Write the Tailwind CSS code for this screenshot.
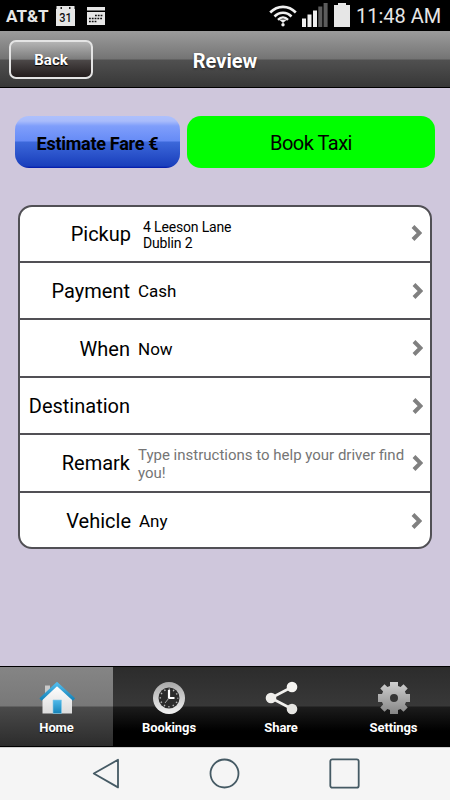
<!DOCTYPE html>
<html lang="en">
<head>
  <meta charset="UTF-8" />
  <meta name="viewport" content="width=device-width, initial-scale=1.0" />
  <title>Review</title>
  <script src="https://cdn.jsdelivr.net/npm/@tailwindcss/browser@4"></script>
</head>
<body class="w-[450px] h-[800px] overflow-hidden flex flex-col bg-[#cfc7dc] text-black font-['Roboto',sans-serif]">

  <!-- Status bar -->
  <div class="h-[31px] shrink-0 bg-black flex items-center pl-[6px] pr-[9px] text-[#e6e6e6]">
    <span class="text-[17px] leading-[31px] font-bold w-[50px] whitespace-nowrap pt-[1px]">AT&amp;T</span>
    <svg class="w-[19px] h-[20px]" viewBox="0 0 19 20">
      <path d="M.500 0H18.500v3H19V20H0V3h.500z" fill="#e6e6e6" />
      <path d="M4.500 1h1.500v2H4.500zM13 1h1.500v2H13z" fill="#222" />
      <text x="9.500" y="16" text-anchor="middle" font-size="12.500" font-weight="500" textLength="12.500" lengthAdjust="spacingAndGlyphs" fill="#111" font-family="Roboto">31</text>
    </svg>
    <svg class="w-[18px] h-[18px] ml-[12px]" viewBox="0 0 18 18">
      <path d="M0 0h18v3.500H0zM0 5h18v13H0z" fill="#e6e6e6" />
      <path d="M8 8.500h8M2 11.500h14M2 14.500h8" stroke="#111" stroke-width="1.700" stroke-dasharray="1.800 1" />
    </svg>
    <svg class="w-[28px] h-[22px] ml-auto mt-[1px]" viewBox="0 0 28 22" fill="none" stroke="#f0f0f0" stroke-width="2.600">
      <path d="M1.200 7.500C8.500 0 19.500 0 26.800 7.500" />
      <path d="M5.500 11.500c5-5 12-5 17 0" />
      <path d="M9 14.800c3-3 7-3 10 0" stroke-width="2.400" />
      <path d="M10 14.500h8l-4 3.500z" fill="#f0f0f0" stroke="none" />
      <circle cx="14" cy="19.700" r="1.700" fill="#f0f0f0" stroke="none" />
    </svg>
    <svg class="w-[26px] h-[24px] ml-[5px] -mt-[1px]" viewBox="0 0 26 24">
      <path d="M0 15.500h4V24H0zM5.500 11.500h4V24h-4zM11 7.500h4V24h-4z" fill="#f0f0f0" />
      <path d="M16.300 3.500h4V24h-4zM21.600 0h4v24h-4z" fill="#5c5c5c" />
    </svg>
    <svg class="w-[16px] h-[24px] ml-[6px] -mt-[1px]" viewBox="0 0 16 24">
      <path d="M4 0h8v2h4v22H0V2h4z" fill="#e6e6e6" />
    </svg>
    <span class="w-[85px] ml-[6px] pt-[2px] text-[20px] leading-[31px] text-right whitespace-nowrap">11:48 AM</span>
  </div>

  <!-- Header -->
  <header class="h-[57px] shrink-0 border-b border-black bg-[linear-gradient(#9c9c9c_0,#747474_28px,#505050_29px,#373737_56px)] grid grid-cols-[1fr_auto_1fr] items-center px-[9px] text-white">
    <button class="w-[84px] h-[39px] rounded-[7px] border-2 border-[#e4e4e4] bg-[linear-gradient(#b4b4b4_0,#7c7c7c_49%,#4c4848_52%,#231c1c_100%)] text-[15px] font-bold pt-[2px] text-shadow-[0_1px_1px_#000]">Back</button>
    <h1 class="text-[20px] font-bold pt-[3px] text-shadow-[0_1px_2px_#222]">Review</h1>
  </header>

  <main class="flex-1 pt-[28px]">
    <div class="flex gap-[7px] pl-[15px] pr-[15px]">
      <button class="w-[165px] h-[52px] rounded-[14px] bg-[linear-gradient(#adc0fd_0,#a9bcfb_5px,#7f9efb_10px,#668bf6_25px,#3c68da_26px,#1a3fbc_50px,#0014a8_52px)] text-[18px] tracking-[-0.27px] font-bold pt-[2px]">Estimate Fare €</button>
      <button class="w-[248px] h-[52px] rounded-[14px] bg-[#00ff00] text-[20px] tracking-[-0.5px] pt-[2px]">Book Taxi</button>
    </div>

    <!-- Booking details -->
    <div class="w-[414px] h-[344px] mt-[37px] ml-[18px] rounded-[14px] border-2 border-[#515055] bg-white grid grid-rows-[56px_57px_58px_57px_58px_54px] divide-y-2 divide-[#515055] overflow-hidden">
      <div class="flex items-center pr-[8px]">
        <span class="w-[111px] text-right text-[20px]">Pickup</span>
        <span class="flex-1 ml-[12px] pt-[1px] text-[14px] tracking-[-0.16px] leading-[16px]">4 Leeson Lane<br>Dublin 2</span>
        <svg class="w-[11px] h-[16px] -mt-[2px]" viewBox="0 0 11 16"><path d="M2 1.500 8.500 8 2 14.500" fill="none" stroke="#808080" stroke-width="4" /></svg>
      </div>
      <div class="flex items-center pt-[1px] pr-[7px]">
        <span class="w-[110px] text-right text-[20px]">Payment</span>
        <span class="flex-1 ml-[8px] pt-[1px] text-[17px]">Cash</span>
        <svg class="w-[11px] h-[16px]" viewBox="0 0 11 16"><path d="M2 1.500 8.500 8 2 14.500" fill="none" stroke="#808080" stroke-width="4" /></svg>
      </div>
      <div class="flex items-center pt-[1px] pr-[7px]">
        <span class="w-[110px] text-right text-[20px]">When</span>
        <span class="flex-1 ml-[8px] pt-[2px] text-[17px]">Now</span>
        <svg class="w-[11px] h-[16px] -mt-[1px]" viewBox="0 0 11 16"><path d="M2 1.500 8.500 8 2 14.500" fill="none" stroke="#808080" stroke-width="4" /></svg>
      </div>
      <div class="flex items-center pt-[1px] pr-[7px]">
        <span class="w-[110px] text-right text-[20px]">Destination</span>
        <span class="flex-1"></span>
        <svg class="w-[11px] h-[16px] -mt-[1px]" viewBox="0 0 11 16"><path d="M2 1.500 8.500 8 2 14.500" fill="none" stroke="#808080" stroke-width="4" /></svg>
      </div>
      <div class="flex items-center pr-[7px]">
        <span class="w-[110px] text-right text-[20px]">Remark</span>
        <span class="flex-1 ml-[8px] pt-[2px] text-[15px] leading-[18px] text-[#757575]">Type instructions to help your driver find<br>you!</span>
        <svg class="w-[11px] h-[16px] -mt-[1px]" viewBox="0 0 11 16"><path d="M2 1.500 8.500 8 2 14.500" fill="none" stroke="#808080" stroke-width="4" /></svg>
      </div>
      <div class="flex items-center pt-[2px] pr-[8px]">
        <span class="w-[111px] text-right text-[20px]">Vehicle</span>
        <span class="flex-1 ml-[8px] pt-[1px] text-[17px]">Any</span>
        <svg class="w-[11px] h-[16px] -mt-[1px]" viewBox="0 0 11 16"><path d="M2 1.500 8.500 8 2 14.500" fill="none" stroke="#808080" stroke-width="4" /></svg>
      </div>
    </div>
  </main>

  <!-- Tabs -->
  <nav class="h-[81px] shrink-0 border-y border-black grid grid-cols-[113px_112px_112px_113px] bg-[linear-gradient(#2c2c2c_0,#383838_39px,#1c1c1c_40px,#000_64px)] text-white text-[13px] tracking-[-0.1px] leading-[15px] font-bold text-shadow-[0_1px_1px_#000]">
    <a class="flex flex-col items-center pt-[14px] gap-[5px] bg-[linear-gradient(#858585_0,#787878_39px,#4a4a4a_40px,#2c2c2c_79px)]">
      <svg class="w-[36px] h-[34px]" viewBox="0 0 36 34">
        <defs>
          <linearGradient id="roof" x1="0" y1="0" x2="0" y2="1"><stop offset="0" stop-color="#4fb9ea" /><stop offset="1" stop-color="#1583b8" /></linearGradient>
          <linearGradient id="wall" x1="0" y1="0" x2="0" y2="1"><stop offset="0" stop-color="#fff" /><stop offset="1" stop-color="#dcdcdc" /></linearGradient>
        </defs>
        <path d="M6 4.500h5V12H6z" fill="#c9c9c9" />
        <path d="M18 4 3.500 17v15.500h29.500V17z" fill="url(#wall)" />
        <path d="M14 19h8.500v13.500H14z" fill="url(#roof)" stroke="#8ccbe6" stroke-width=".6" />
        <path d="M1.500 18.500 18 3l17 15.500" fill="none" stroke="url(#roof)" stroke-width="3.200" />
      </svg>
      <span>Home</span>
    </a>
    <a class="flex flex-col items-center pt-[14px] gap-[5px]">
      <svg class="w-[34px] h-[34px]" viewBox="0 0 34 34">
        <defs>
          <linearGradient id="rim" x1="0" y1="0" x2="0" y2="1"><stop offset="0" stop-color="#a8a8a8" /><stop offset="1" stop-color="#f2f2f2" /></linearGradient>
        </defs>
        <circle cx="17" cy="17" r="16" fill="url(#rim)" />
        <circle cx="17" cy="17" r="10.500" fill="#2b2b2b" />
        <circle cx="17" cy="17" r="8.700" fill="none" stroke="#bbb" stroke-width="1.500" stroke-dasharray="1.300 3.255" stroke-dashoffset=".65" />
        <path d="M17 9v8h5.500" fill="none" stroke="#fff" stroke-width="2.200" />
        <path d="m17 17-4 5" stroke="#aaa" stroke-width="1" />
      </svg>
      <span>Bookings</span>
    </a>
    <a class="flex flex-col items-center pt-[14px] gap-[5px]">
      <svg class="w-[34px] h-[34px]" viewBox="0 0 34 34">
        <path d="M28 6 7 17l21 11" fill="none" stroke="#f2f1ee" stroke-width="2.600" />
        <circle cx="28" cy="6" r="5.300" fill="#f5f4f1" />
        <circle cx="7" cy="17" r="5.300" fill="#efeeeb" />
        <circle cx="28" cy="28" r="5.300" fill="#e6e5e2" />
      </svg>
      <span>Share</span>
    </a>
    <a class="flex flex-col items-center pt-[14px] gap-[5px]">
      <svg class="w-[34px] h-[34px]" viewBox="0 0 34 34">
        <defs>
          <linearGradient id="gear" gradientUnits="userSpaceOnUse" x1="0" y1="1" x2="0" y2="33"><stop offset="0" stop-color="#d0d0d0" /><stop offset="1" stop-color="#858585" /></linearGradient>
        </defs>
        <path fill="url(#gear)" fill-rule="evenodd" d="M13 1h8v4l2.600 1.100 2.900-2.800 4.200 4.200-2.800 2.900L29 13h4v8h-4l-1.100 2.600 2.800 2.900-4.200 4.200-2.900-2.800L21 29v4h-8v-4l-2.600-1.100-2.900 2.800-4.200-4.200 2.800-2.900L5 21H1v-8h4l1.100-2.600-2.800-2.900 4.200-4.200 2.900 2.800L13 5zM17 13a4 4 0 1 0 0 8 4 4 0 0 0 0-8z" />
      </svg>
      <span>Settings</span>
    </a>
  </nav>

  <!-- Android navigation -->
  <div class="h-[53px] shrink-0 border-t border-[#d0d0d0] bg-[#f5f5f5] flex justify-between pt-[10px] pl-[92px] pr-[90px]">
    <svg class="w-[28px] h-[31px]" viewBox="0 0 28 31"><path d="M1.800 15.500 26 1.800v27.600z" fill="none" stroke="#455a64" stroke-width="1.800" stroke-linejoin="round" /></svg>
    <svg class="w-[31px] h-[31px]" viewBox="0 0 31 31"><circle cx="15.500" cy="15.500" r="14" fill="none" stroke="#455a64" stroke-width="1.800" /></svg>
    <svg class="w-[31px] h-[31px]" viewBox="0 0 31 31"><rect x="1.300" y="1.300" width="28.400" height="28.400" rx="2" fill="none" stroke="#455a64" stroke-width="1.800" /></svg>
  </div>

</body>
</html>
